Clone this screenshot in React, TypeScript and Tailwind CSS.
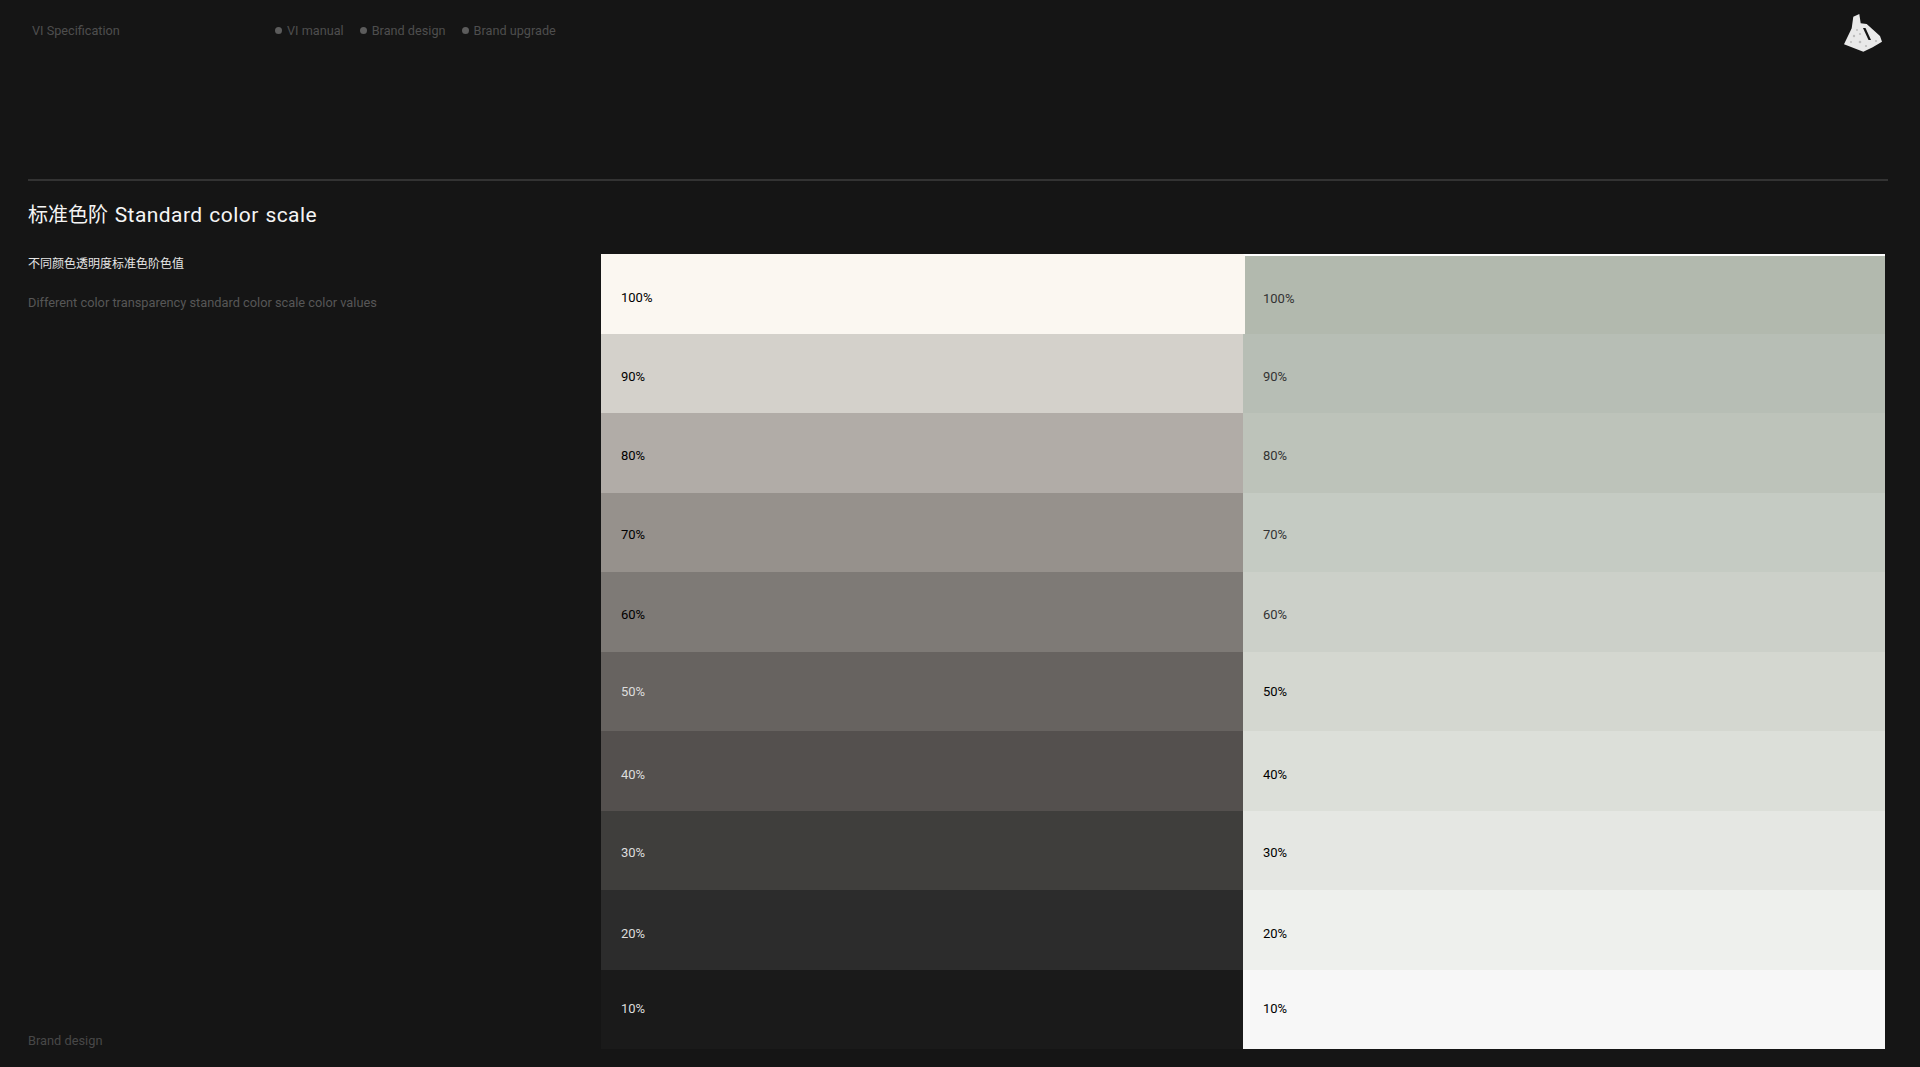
const offsets = ["pt-[7px]", "pt-[7px]", "pt-[5px]", "pt-[5px]", "pt-[5px]", "pt-0", "pt-[7px]", "pt-[5px]", "pt-[7px]", "pb-[2px]"];
const left = [
  ["100%", "#fbf7f1", "#000"], ["90%", "#d4d1cb", "#000"], ["80%", "#b1aca7", "#000"], ["70%", "#96918c", "#000"], ["60%", "#7e7a76", "#000"],
  ["50%", "#676360", "#ddd"], ["40%", "#54504e", "#ddd"], ["30%", "#3f3e3c", "#ddd"], ["20%", "#2c2c2c", "#ddd"], ["10%", "#1a1a1a", "#ddd"],
];
const right = [
  ["100%", "#b2b9ae", "#333"], ["90%", "#b7beb5", "#333"], ["80%", "#bdc3ba", "#333"], ["70%", "#c5cbc3", "#333"], ["60%", "#ccd0c9", "#333"],
  ["50%", "#d4d7d0", "#000"], ["40%", "#dcdfd9", "#000"], ["30%", "#e5e7e3", "#000"], ["20%", "#eef0ed", "#000"], ["10%", "#f7f7f7", "#000"],
];

function Column({ rows, isRight }: { rows: string[][]; isRight?: boolean }) {
  return (
    <div className="flex-1 flex flex-col">
      {rows.map(([label, bg, fg], i) => (
        <div
          key={label}
          className={`h-[79.5px] flex items-center text-[13px] ${offsets[i]} ${isRight && i === 0 ? "pl-[18px] border-t-2 border-l-2 border-t-white border-l-[#fbf7f1]" : "pl-5"}`}
          style={{ background: bg, color: fg }}
        >
          {label}
        </div>
      ))}
    </div>
  );
}

function Logo() {
  return (
    <svg width="42" height="44" viewBox="0 0 42 44" className="block">
      <polygon points="0,32.3 7.7,16.3 9.3,4.7 15.3,2 16.7,11.3 22.7,12 36,24 38,29.7 28.7,35.3 19.3,39.7" fill="#e9e9e9" />
      <polygon points="19,16 21.5,16 27,28 24.5,28" fill="#151515" />
      <g fill="#bdbdbd">
        <circle cx="10" cy="24" r="1.2" /><circle cx="16" cy="30" r="1.3" /><circle cx="22" cy="34" r="1.1" />
        <circle cx="7" cy="30" r="1" /><circle cx="13" cy="18" r="1" /><circle cx="32" cy="29" r="1.1" /><circle cx="16" cy="22" r="1.1" />
      </g>
    </svg>
  );
}

export default function App() {
  return (
    <div className="w-[1920px] h-[1067px] bg-[#151515] flex flex-col overflow-hidden font-['Roboto','Noto_Sans_CJK_SC',sans-serif]">
      <header className="h-[179px] shrink-0 flex items-start justify-between pl-8 pr-[34px] pt-[12px]">
        <div className="flex items-center h-[38px] text-[12.7px] text-[#4e4e4e]">
          <span className="w-[243px]">VI Specification</span>
          <div className="flex gap-[16px]">
            {["VI manual", "Brand design", "Brand upgrade"].map((t) => (
              <span key={t} className="flex items-center gap-[5px]">
                <span className="w-[7px] h-[7px] rounded-full bg-[#5c5c5c]" />
                {t}
              </span>
            ))}
          </div>
        </div>
        <Logo />
      </header>
      <div className="h-[1.5px] ml-[28px] mr-[32px] bg-[#333333] shrink-0" />
      <main className="flex-1 flex pl-7 pr-[35px] pb-[17px]">
        <div className="w-[573px] flex flex-col">
          <h1 className="mt-[19.5px] leading-[30px] text-[#f5f5f5] font-normal">
            <span className="text-[20px]">标准色阶</span>
            <span className="text-[21px] tracking-[0.45px] [word-spacing:1px]"> Standard color scale</span>
          </h1>
          <p className="mt-[22.7px] text-[12px] leading-[18px] text-[#e6e6e6]">不同颜色透明度标准色阶色值</p>
          <p className="mt-[21px] text-[12.8px] leading-[18px] text-[#575757]">Different color transparency standard color scale color values</p>
          <p className="mt-auto text-[12.8px] leading-[18px] text-[#484848]">Brand design</p>
        </div>
        <div className="mt-[73.5px] flex-1 flex">
          <Column rows={left} />
          <Column rows={right} isRight />
        </div>
      </main>
    </div>
  );
}
